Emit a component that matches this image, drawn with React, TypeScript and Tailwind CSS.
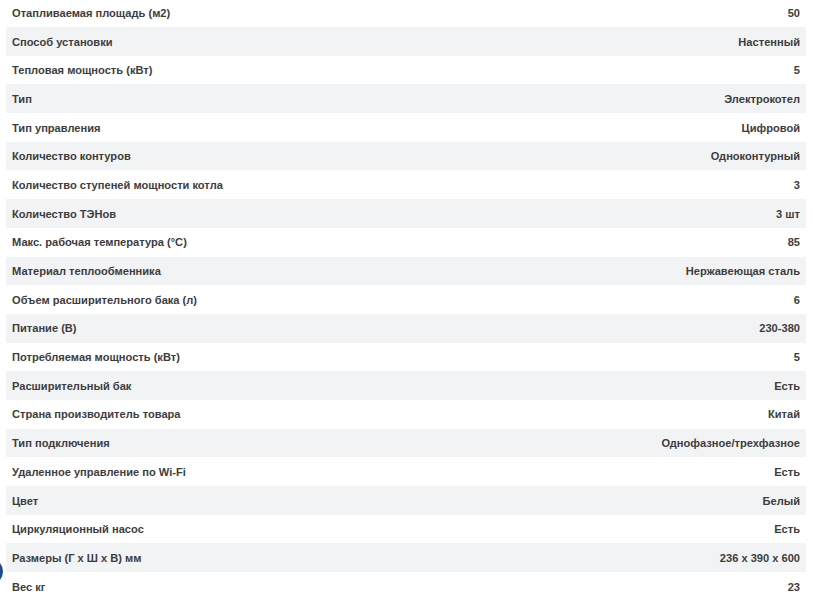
const rows: [string, string][] = [
  ["Отапливаемая площадь (м2)", "50"],
  ["Способ установки", "Настенный"],
  ["Тепловая мощность (кВт)", "5"],
  ["Тип", "Электрокотел"],
  ["Тип управления", "Цифровой"],
  ["Количество контуров", "Одноконтурный"],
  ["Количество ступеней мощности котла", "3"],
  ["Количество ТЭНов", "3 шт"],
  ["Макс. рабочая температура (°C)", "85"],
  ["Материал теплообменника", "Нержавеющая сталь"],
  ["Объем расширительного бака (л)", "6"],
  ["Питание (В)", "230-380"],
  ["Потребляемая мощность (кВт)", "5"],
  ["Расширительный бак", "Есть"],
  ["Страна производитель товара", "Китай"],
  ["Тип подключения", "Однофазное/трехфазное"],
  ["Удаленное управление по Wi-Fi", "Есть"],
  ["Цвет", "Белый"],
  ["Циркуляционный насос", "Есть"],
  ["Размеры (Г x Ш x В) мм", "236 x 390 x 600"],
  ["Вес кг", "23"],
];

export default function App() {
  return (
    <div className="relative w-[813px] h-[605px] overflow-hidden bg-white font-['Liberation_Sans',Arial,sans-serif]">
      <div className="ml-[6px] w-[800px] -mt-[1.7px]">
        {rows.map(([label, value], i) => (
          <div
            key={label}
            className={`flex h-[28.7px] items-center justify-between px-[6px] pt-[1px] text-[11.1px] font-bold text-[#3d3d3d] ${
              i % 2 === 1 ? "bg-[#f2f3f4]" : "bg-white"
            }`}
          >
            <span>{label}</span>
            <span>{value}</span>
          </div>
        ))}
      </div>
      {/* floating button cut off at the left edge */}
      <div className="absolute -left-[24px] top-[558px] w-[27px] h-[27px] rounded-full bg-[#1e4a8a]" />
    </div>
  );
}
